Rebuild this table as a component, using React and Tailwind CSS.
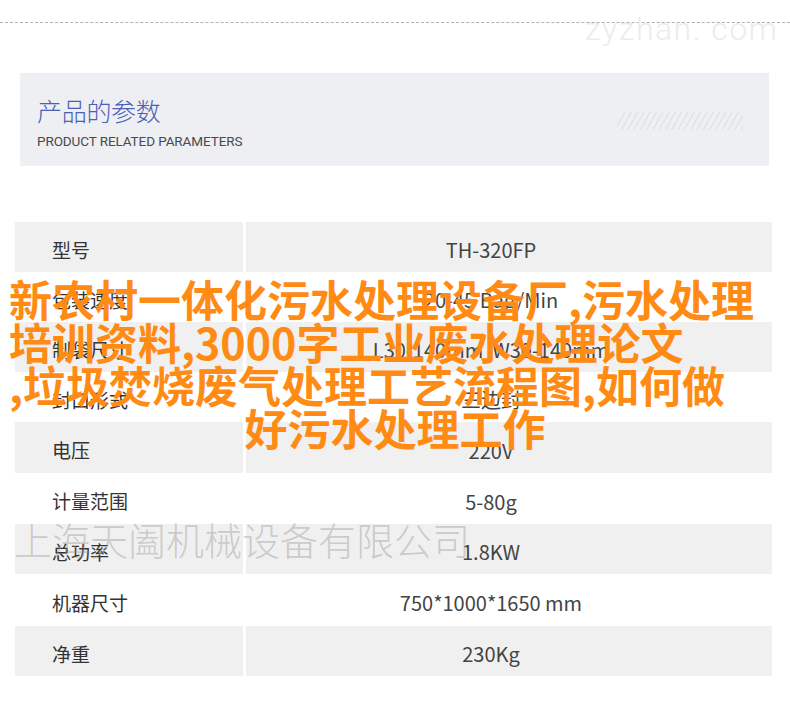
import React from "react";

const rows = [
  { label: "型号", value: "TH-320FP", gray: true, h: "h-[50px]" },
  { label: "包装速度", value: "20-45 Bag/Min", gray: false, h: "h-[50px]" },
  { label: "制袋尺寸", value: "L30-140mm  W30-140mm", gray: true, h: "h-[50px]" },
  { label: "封口形式", value: "三边封", gray: false, h: "h-[50px]" },
  { label: "电压", value: "220V", gray: true, h: "h-[51px]" },
  { label: "计量范围", value: "5-80g", gray: false, h: "h-[51px]" },
  { label: "总功率", value: "1.8KW", gray: true, h: "h-[50px]" },
  { label: "机器尺寸", value: "750*1000*1650 mm", gray: false, h: "h-[52px]" },
  { label: "净重", value: "230Kg", gray: true, h: "h-[50px]" },
];

function Hatch() {
  const lines = [];
  for (let i = 0; i < 21; i++) {
    const x = i * 6.3;
    lines.push(
      <line key={i} x1={x - 2} y1={18} x2={x + 8} y2={0} stroke="#dadbe0" strokeWidth="1" />
    );
  }
  return (
    <svg width="126" height="18" viewBox="0 0 126 18" className="mt-[39px] shrink-0">
      <defs>
        <clipPath id="hc">
          <rect x="0" y="0" width="126" height="18" />
        </clipPath>
      </defs>
      <g clipPath="url(#hc)">{lines}</g>
    </svg>
  );
}

export default function App() {
  return (
    <div className="relative w-[790px] h-[715px] bg-white overflow-hidden font-['Noto_Sans_CJK_SC',sans-serif]">
      <div className="pt-[22px]">
        <div className="border-t border-dashed border-[#b2b2b2]" />
      </div>

      <div className="mt-[50px] ml-[20px] w-[749px] h-[93px] bg-[#eeeff3] flex justify-between pl-[17px] pr-[26px]">
        <div className="flex flex-col pt-[22px]">
          <div className="text-[25px] leading-[30px] text-[#4a60b4] font-light tracking-[-0.3px]">
            产品的参数
          </div>
          <div className="mt-[8px] text-[13.5px] leading-[16px] text-[#4a4a4a] font-['Roboto',sans-serif] tracking-[-0.1px]">
            PRODUCT RELATED PARAMETERS
          </div>
        </div>
        <Hatch />
      </div>

      <div className="mt-[56px] ml-[15px] w-[757px] flex flex-col">
        {rows.map((r) => (
          <div key={r.label} className={`flex gap-[3px] ${r.h}`}>
            <div
              className={`w-[228px] flex items-center pl-[37px] pt-[6px] text-[19px] text-[#333] ${
                r.gray ? "bg-[#f0f0f0]" : "bg-white"
              }`}
            >
              {r.label}
            </div>
            <div
              className={`flex-1 flex items-center justify-center pr-[36px] pt-[6px] text-[20px] text-[#444] whitespace-pre ${
                r.gray ? "bg-[#f0f0f0]" : "bg-white"
              }`}
            >
              {r.value}
            </div>
          </div>
        ))}
      </div>

      {/* site watermark */}
      <div className="absolute left-[585px] top-[13px] text-[32px] leading-[32px] font-['Roboto',sans-serif] font-light tracking-[1.5px] text-[#ececec] whitespace-nowrap">
        zyzhan. com
      </div>

      {/* company watermark */}
      <div className="absolute left-[14px] top-[519px] text-[38px] leading-[40px] font-light text-[rgba(150,150,150,0.42)] whitespace-nowrap">
        上海天阖机械设备有限公司
      </div>

      {/* orange overlay title */}
      <div className="absolute left-0 right-0 top-[277px] text-[43px] leading-[43px] font-bold text-[#ff8a14] whitespace-nowrap">
        <div className="pl-[9px]">新农村一体化污水处理设备厂,污水处理</div>
        <div className="pl-[9px]">培训资料,3000字工业废水处理论文</div>
        <div className="pl-[9px]">,垃圾焚烧废气处理工艺流程图,如何做</div>
        <div className="text-center">好污水处理工作</div>
      </div>
    </div>
  );
}
